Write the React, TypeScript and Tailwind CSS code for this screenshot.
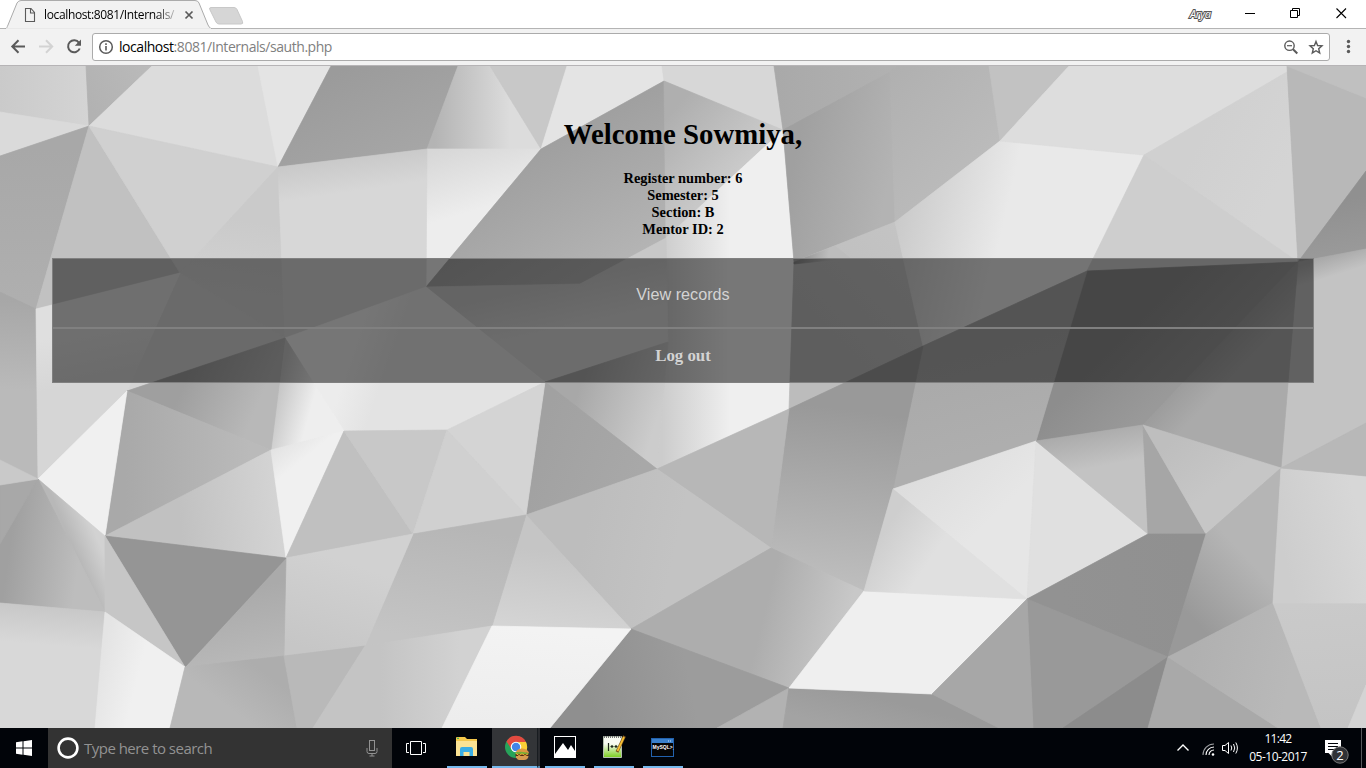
import React from "react";

type Facet = [points: string, from: string, to?: string, axis?: [number, number, number, number]];

const facets: Facet[] = [
  ["0,66 86,66 89,126 0,112", "#cacaca", "#d4d4d4", [0, 90, 89, 90]],
  ["0,112 89,126 0,156", "#dadada"],
  ["86,66 152,66 89,126", "#b2b2b2", "#bababa", [86, 100, 150, 66]],
  ["89,126 152,66 258,66 278,167", "#dcdcdc"],
  ["258,66 331,66 278,167", "#e4e4e4"],
  ["331,66 458,66 427,149 278,167", "#9b9b9b", "#a6a6a6", [350, 66, 400, 160]],
  ["458,66 490,66 541,149 427,149", "#b4b4b4", "#dcdcdc", [435, 110, 510, 110]],
  ["490,66 567,66 541,149", "#c8c8c8"],
  ["567,66 662,66 664,81 541,149", "#e4e4e4"],
  ["662,66 774,66 783,130 664,81", "#d7d7d7"],
  ["427,149 541,149 426,287", "#d7d7d7", "#ededed", [440, 149, 460, 215]],
  ["541,149 664,81 666,238 580,284 426,287", "#9d9d9d", "#b4b4b4", [540, 130, 620, 265]],
  ["664,81 783,130 666,238", "#afafaf", "#cacaca", [664, 120, 730, 180]],
  ["783,130 666,238 668,342 657,469 789,409 794,262", "#cccccc", "#efefef", [662, 240, 730, 240]],
  ["426,287 580,284 666,238 668,342 545,382", "#c8c8c8", "#d8d8d8", [540, 285, 550, 330]],
  ["545,382 668,342 657,469", "#a8a8a8", "#cccccc", [580, 385, 660, 410]],
  ["545,382 657,469 526,515", "#a1a1a1", "#a8a8a8", [540, 430, 640, 470]],
  ["774,66 897,66 890,72 783,130", "#a9a9a9", "#b1b1b1", [774, 80, 890, 80]],
  ["783,130 890,72 895,222 794,262", "#a0a0a0", "#b3b3b3", [790, 180, 885, 200]],
  ["890,72 897,66 989,66 1000,141 895,222", "#b0b0b0", "#bbbbbb", [895, 66, 990, 150]],
  ["989,66 1069,66 1000,141", "#c2c2c2"],
  ["794,262 895,222 923,346 789,409", "#bcbcbc", "#c4c4c4", [794, 320, 900, 220]],
  ["794,262 835,246 850,258 794,264", "#888888", "#bdbdbd", [794, 258, 828, 262]],
  ["895,222 1000,141 1144,155 1088,271 923,346", "#c8c8c8", "#e9e9e9", [890, 215, 1000, 240]],
  ["1000,141 1069,66 1288,66 1287,72 1144,155", "#dddddd"],
  ["1287,72 1298,262 1144,155", "#d0d0d0", "#d4d4d4", [1200, 140, 1280, 180]],
  ["1144,155 1298,262 1087,271", "#cecece"],
  ["1287,66 1366,98 1366,171 1298,262", "#b8b8b8"],
  ["1287,66 1366,66 1366,98", "#c0c0c0"],
  ["1298,262 1366,171 1366,249", "#909090", "#9a9a9a", [1340, 200, 1350, 255]],
  ["1298,262 1366,249 1366,423 1281,468", "#aaaaaa", "#c3c3c3", [1330, 256, 1336, 275]],
  ["1087,271 1298,262 1143,425 1036,441", "#8d8d8d", "#999999", [1140, 320, 1190, 370]],
  ["1298,262 1143,425 1281,468", "#999999", "#aaaaaa", [1215, 335, 1245, 363]],
  ["923,346 1087,271 1036,441 893,489", "#a8a8a8", "#aeaeae", [950, 340, 980, 450]],
  ["789,409 923,346 893,489 864,591 771,548", "#999999", "#bebebe", [850, 410, 828, 585]],
  ["789,409 771,548 657,469", "#b7b7b7"],
  ["657,469 771,548 631,629 526,515", "#bdbdbd", "#c3c3c3", [590, 510, 680, 530]],
  ["526,515 631,629 492,626", "#c5c5c5", "#d4d4d4", [540, 550, 530, 626]],
  ["771,548 864,591 789,688 631,629", "#adadad", "#c8c8c8", [765, 610, 845, 630]],
  ["631,629 789,688 717,728 550,728", "#8f8f8f", "#9c9c9c", [590, 700, 690, 680]],
  ["789,688 717,728 783,728", "#b2b2b2"],
  ["789,688 932,694 999,728 783,728", "#9a9a9a", "#a3a3a3", [850, 690, 840, 728]],
  ["864,591 1027,599 932,694 789,688", "#efefef"],
  ["893,489 1036,441 1027,599", "#dddddd", "#e6e6e6", [920, 470, 980, 530]],
  ["893,489 1027,599 864,591", "#cecece", "#e0e0e0", [885, 530, 930, 560]],
  ["1036,441 1148,534 1027,599", "#e0e0e0"],
  ["1036,441 1143,425 1148,534", "#ababab", "#c3c3c3", [1085, 432, 1092, 468]],
  ["1143,425 1148,534 1206,534", "#a6a6a6"],
  ["1143,425 1206,534 1281,468", "#bebebe", "#c6c6c6", [1160, 450, 1200, 500]],
  ["1148,534 1206,534 1168,657 1027,599", "#929292", "#909090", [1060, 590, 1190, 570]],
  ["1206,534 1281,468 1273,603 1168,657", "#999999", "#b5b5b5", [1180, 605, 1240, 550]],
  ["1027,599 1168,657 1063,728 1033,728", "#999999"],
  ["1027,599 1033,728 999,728 932,694", "#a7a7a7"],
  ["1168,657 1063,728 1148,728", "#8c8c8c"],
  ["1168,657 1148,728 1278,728", "#a9a9a9"],
  ["1168,657 1273,603 1321,728 1278,728", "#b0b0b0", "#b9b9b9", [1190, 660, 1290, 680]],
  ["1273,603 1366,603 1366,685 1348,728 1321,728", "#cacaca", "#c4c4c4", [1310, 603, 1320, 728]],
  ["1366,685 1348,728 1366,728", "#d4d4d4"],
  ["1281,468 1366,476 1366,603 1273,603", "#cdcdcd", "#d7d7d7", [1280, 540, 1360, 520]],
  ["1281,468 1366,423 1366,476", "#b8b8b8"],
  ["0,156 89,126 36,309 0,292", "#a8a8a8", "#afafaf", [30, 150, 30, 300]],
  ["0,292 36,309 38,479 0,460", "#a7a7a7", "#bababa", [15, 300, 10, 390]],
  ["89,126 180,273 36,309", "#c1c1c1"],
  ["89,126 278,167 180,273", "#d0d0d0"],
  ["278,167 285,338 180,273", "#cacaca", "#d2d2d2", [240, 220, 230, 290]],
  ["278,167 427,149 426,287 285,338", "#c9c9c9", "#d7d7d7", [345, 158, 350, 192]],
  ["180,273 285,338 127,391", "#d4d4d4"],
  ["36,309 180,273 127,391 38,479", "#dfdfdf", "#d6d6d6", [90, 330, 100, 380]],
  ["285,338 426,287 545,382 447,430 344,431", "#ececec", "#e3e3e3", [340, 390, 375, 402]],
  ["285,338 344,431 271,450", "#c5c5c5", "#eeeeee", [276, 395, 312, 405]],
  ["127,391 285,338 271,450", "#9f9f9f", "#b8b8b8", [190, 370, 260, 400]],
  ["105,536 127,391 271,450", "#a9a9a9", "#bababa", [125, 450, 250, 450]],
  ["38,479 127,391 105,536", "#f0f0f0"],
  ["105,536 271,450 286,558", "#c1c1c1", "#d4d4d4", [180, 520, 280, 510]],
  ["271,450 344,431 286,558", "#dfdfdf", "#f0f0f0", [278, 435, 300, 462]],
  ["344,431 413,534 286,558", "#c0c0c0"],
  ["344,431 447,430 413,534", "#c8c8c8"],
  ["447,430 545,382 526,515", "#d4d4d4"],
  ["447,430 526,515 413,534", "#d0d0d0"],
  ["413,534 526,515 492,626 365,646", "#b6b6b6", "#c4c4c4", [450, 525, 430, 640]],
  ["286,558 413,534 365,646 284,656", "#d1d1d1", "#c6c6c6", [340, 560, 310, 650]],
  ["286,558 284,656 185,667", "#aaaaaa", "#b8b8b8", [240, 590, 255, 660]],
  ["105,536 286,558 185,667", "#959595"],
  ["38,479 105,536 105,612", "#b8b8b8", "#d2d2d2", [75, 550, 98, 540]],
  ["0,603 0,540 38,479 105,612", "#a0a0a0", "#bdbdbd", [5, 580, 75, 590]],
  ["0,485 38,479 0,544", "#a8a8a8"],
  ["0,460 38,479 0,485", "#c9c9c9"],
  ["105,536 185,667 105,612", "#c6c6c6"],
  ["0,603 105,612 95,728 0,728", "#c8c8c8", "#d8d8d8", [50, 607, 47, 645]],
  ["105,612 185,667 170,728 95,728", "#e4e4e4", "#f0f0f0", [100, 660, 140, 670]],
  ["185,667 284,656 297,728 170,728", "#adadad", "#b8b8b8", [255, 665, 225, 705]],
  ["284,656 365,646 313,728 297,728", "#b9b9b9"],
  ["365,646 492,626 442,728 313,728", "#c4c4c4", "#d2d2d2", [380, 690, 460, 690]],
  ["492,626 631,629 550,728 442,728", "#f3f3f3", "#ededed", [540, 630, 530, 728]],
];

const Backdrop = () => (
  <svg className="absolute inset-0 h-full w-full" viewBox="0 66 1366 662" preserveAspectRatio="none" aria-hidden="true">
    <defs>
      <filter id="soften" x="0" y="0" width="1" height="1">
        <feGaussianBlur stdDeviation="0.7" />
      </filter>
      {facets.map(([, from, to, axis], i) =>
        to && axis ? (
          <linearGradient key={i} id={`f${i}`} gradientUnits="userSpaceOnUse" x1={axis[0]} y1={axis[1]} x2={axis[2]} y2={axis[3]}>
            <stop offset="0" stopColor={from} />
            <stop offset="1" stopColor={to} />
          </linearGradient>
        ) : null
      )}
    </defs>
    <g id="mesh">
      {facets.map(([points, from, to], i) => {
        const paint = to ? `url(#f${i})` : from;
        return <polygon key={i} points={points} fill={paint} stroke={paint} strokeWidth="0.7" />;
      })}
    </g>
    <use href="#mesh" filter="url(#soften)" />
  </svg>
);

const TitleBar = () => (
  <div className="relative h-[28px] shrink-0 bg-white">
    <svg className="absolute inset-0" width="1366" height="29" aria-hidden="true">
      <path d="M0 28.5H1366" stroke="#b4b4b4" />
      <path d="M5 29 C7 28.500 7 27 8 25 L17 3 Q18.500 .5 21 .5 H195 Q198 .5 199 3 L208 25 Q209.500 28.500 212 29Z" fill="#f2f2f2" stroke="#ababab" />
      <path d="M6 29H211" stroke="#f2f2f2" strokeWidth="1.500" />
      <path d="M211 7.500H234Q236 7.500 237 9.500L242.500 21.500Q243.500 24 241 24H219Q217 24 216 22L209.800 9.500Q209 7.500 211 7.500Z" fill="#d6d6d6" stroke="#c8c8c8" />
      <path d="M25.500 8.500H31L34.500 12.500V21.500H25.500ZM30.500 8.500V13H34.500" fill="none" stroke="#5a5a5a" strokeWidth="1.100" />
      <path d="M185.500 11.500L192.500 18.500M192.500 11.500L185.500 18.500" stroke="#5a5a5a" strokeWidth="1.700" />
      <path d="M1245 13.500H1255" stroke="#000" />
      <path d="M1290.500 10.500H1297.500V17.500H1290.500ZM1292.500 10.500V8.500H1299.500V15.500H1297.500" fill="none" stroke="#000" />
      <path d="M1336.500 8.500L1346 18M1346 8.500L1336.500 18" stroke="#000" strokeWidth="1.100" />
    </svg>
    <div className="relative flex h-full items-center">
      <span className="ml-[44px] w-[136px] whitespace-nowrap bg-gradient-to-r from-black from-[82%] to-transparent bg-clip-text pt-[2px] font-['Open_Sans',sans-serif] text-[12px] leading-[18px] tracking-[-0.360px] text-transparent">
        localhost:8081/Internals/
      </span>
      <span className="ml-[1010px] font-['Open_Sans',sans-serif] text-[11px] font-normal italic leading-4 tracking-[-0.300px] text-white [-webkit-text-stroke:2px_#555] [paint-order:stroke_fill]">
        Arya
      </span>
    </div>
  </div>
);

const Toolbar = () => (
  <div className="flex h-[38px] shrink-0 items-center border-b border-[#b6b4b6] bg-[#f2f2f2]">
    <svg width="92" height="37" className="shrink-0" fill="none" stroke="#5a5a5a" strokeWidth="2" aria-hidden="true">
      <path d="M25 18.500H12.500M18.500 12.300L12.300 18.500L18.500 24.700" />
      <path d="M39 18.500H51.500M46 12.300L52.200 18.500L46 24.700" stroke="#d3d3d3" />
      <path d="M79 14.800A6 6 0 1 0 79.700 20.500" />
      <path d="M81 11.500V17.700H74.800Z" fill="#5a5a5a" stroke="none" />
    </svg>
    <div className="flex h-[28px] w-[1238px] items-center rounded-[3px] border border-[#ababab] bg-white">
      <svg width="26" height="26" className="shrink-0" fill="none" stroke="#5a5a5a" aria-hidden="true">
        <circle cx="13" cy="13" r="6.300" strokeWidth="1.500" />
        <path d="M13 12V16.500M13 9.300V11" strokeWidth="1.600" />
      </svg>
      <span className="whitespace-nowrap font-['Open_Sans',sans-serif] text-[14px] leading-5 tracking-[-0.450px] text-[#808080]">
        <span className="text-black">localhost</span>:8081/Internals/sauth.php
      </span>
      <svg width="50" height="26" className="ml-auto mr-[4px] shrink-0" fill="none" stroke="#5a5a5a" aria-hidden="true">
        <circle cx="14.500" cy="11.700" r="4.700" strokeWidth="1.400" />
        <path d="M12 11.700H17" strokeWidth="1.200" />
        <path d="M18 15.200L22.300 19.500" strokeWidth="2" />
        <path d="M42 7.500L43.600 11.500L48 11.900L44.700 14.700L45.700 19L42 16.700L38.300 19L39.300 14.700L36 11.900L40.400 11.500Z" transform="translate(-1 0)" strokeWidth="1.400" />
      </svg>
    </div>
    <svg width="36" height="37" fill="#5a5a5a" aria-hidden="true">
      <circle cx="18.500" cy="13.500" r="1.700" />
      <circle cx="18.500" cy="18.500" r="1.700" />
      <circle cx="18.500" cy="23.500" r="1.700" />
    </svg>
  </div>
);

const TaskButton = ({ children }: { children: React.ReactNode }) => (
  <div className="flex h-full w-[49px] items-center justify-center">
    <div className="flex h-full w-[40px] items-center justify-center border-b-2 border-[#76b9ed]">{children}</div>
  </div>
);

const Taskbar = () => (
  <footer className="flex h-[40px] shrink-0 bg-[#010409] font-['Open_Sans',sans-serif]">
    <div className="flex w-[48px] items-center justify-center">
      <svg width="16" height="16" fill="#fff" aria-hidden="true">
        <path d="M0 2.200L6.500 1.300V7.500H0ZM7.500 1.200L16 0V7.500H7.500ZM0 8.500H6.500V14.700L0 13.800ZM7.500 8.500H16V16L7.500 14.800Z" />
      </svg>
    </div>
    <div className="flex w-[344px] items-center bg-[#333333]">
      <svg width="36" height="40" aria-hidden="true">
        <circle cx="20" cy="20" r="9.400" fill="none" stroke="#fff" strokeWidth="2.600" />
      </svg>
      <span className="whitespace-nowrap text-[15px] leading-5 tracking-[-0.520px] text-[#929292]">Type here to search</span>
      <svg width="14" height="18" className="ml-auto mr-[13px]" fill="none" stroke="#929292" aria-hidden="true">
        <rect x="4.500" y="1.500" width="5" height="10" />
        <path d="M2 9V12.500Q2 14.500 4 14.500H10Q12 14.500 12 12.500V9M7 14.500V17M4.500 17H9.500" />
      </svg>
    </div>
    <div className="flex w-[50px] items-center pl-[14px]">
      <svg width="20" height="16" fill="none" stroke="#fff" aria-hidden="true">
        <path d="M4.500 1.500H15.500V14.500H4.500ZM3 3.500H.5V12.500H3M17 3.500H19.500V12.500H17" />
      </svg>
    </div>
    <TaskButton>
      <svg width="22" height="20" aria-hidden="true">
        <path d="M0 1Q0 0 1 0H9L11 2H21V19H0Z" fill="#f5c84c" />
        <path d="M0 4H21V18Q21 19 20 19H1Q0 19 0 18Z" fill="#fbe394" />
        <path d="M1 .8H3V2H1Z" fill="#43b85d" />
        <path d="M4 19V12Q4 10 6 10H15Q17 10 17 12V19H13.500V15H7.500V19Z" fill="#3aaee4" />
      </svg>
    </TaskButton>
    <div className="flex h-full w-[49px]">
      <div className="ml-[1px] flex h-full w-[45px] items-center justify-center border-b-2 border-[#76b9ed] bg-[#333538]">
        <svg width="26" height="26" viewBox="0 0 26 26" className="ml-[4px] mt-[2px]" aria-hidden="true">
          <circle cx="12" cy="12" r="11" fill="#27a35a" />
          <path d="M2.500 6.500A11 11 0 0 1 22 7H12A5 5 0 0 0 7.500 14Z" fill="#e34a40" />
          <path d="M22 7A11 11 0 0 1 12 23L16.500 14A5 5 0 0 0 12 7Z" fill="#fbce35" />
          <circle cx="12" cy="12" r="5.300" fill="#fff" />
          <circle cx="12" cy="12" r="4.200" fill="#4285e8" />
          <path d="M12 17Q13 13.500 18.500 13.500Q24 14 25 18Z" fill="#dc9842" />
          <path d="M11 17.500Q18 15.500 25 18.500L24 20H12Z" fill="#77ac35" />
          <path d="M11.500 19H24.500V21.500H11.500Z" fill="#542817" />
          <path d="M12 21H24.500Q24 25 20 25H15Q12 24 12 21Z" fill="#d69a50" />
          <path d="M12 18.500L15 20.500L18 18.800L21 20.500L24 19" fill="none" stroke="#f0bc38" />
        </svg>
      </div>
      <div className="w-[3px] border-b-2 border-l border-b-[#5586ac] border-l-[#181c20] bg-[#292b2f]" />
    </div>
    <TaskButton>
      <svg width="22" height="22" aria-hidden="true">
        <path d="M0 0H22V22H0Z" fill="#fff" />
        <path d="M1 1H21V15L17 9L14 14L9 7L1 18Z" fill="#010409" />
      </svg>
    </TaskButton>
    <TaskButton>
      <svg width="24" height="26" viewBox="0 0 24 26" aria-hidden="true">
        <defs>
          <linearGradient id="page" x2="0" y2="1">
            <stop offset=".35" stopColor="#f8fbf2" />
            <stop offset="1" stopColor="#79cd1c" />
          </linearGradient>
        </defs>
        <path d="M1.500 2.500H19.500V23.500H1.500Z" fill="url(#page)" stroke="#b4c0ae" />
        <path d="M2 3H19" stroke="#777" strokeWidth="2" strokeDasharray="1 1" />
        <path d="M6.500 9V17M8.500 12.500H11.500M12.500 12.500H15.500M10 11V14M14 11V14" stroke="#1d2619" strokeWidth="1.200" />
        <path d="M22.500 2L15 18" stroke="#76501c" strokeWidth="3" />
        <path d="M22 3L15.500 17" stroke="#f6bf35" strokeWidth="1.800" />
      </svg>
    </TaskButton>
    <TaskButton>
      <svg width="23" height="19" aria-hidden="true">
        <rect x=".5" y=".5" width="22" height="18" fill="#050505" stroke="#2262ae" />
        <path d="M1 1H22V5H1Z" fill="#3a80cc" />
        <path d="M17 3H21" stroke="#cfe3fa" strokeDasharray="1 1" />
        <text x="1.500" y="11" fill="#fff" fontSize="5" fontWeight="bold" fontFamily="Liberation Sans, sans-serif">MySQL&gt;_</text>
      </svg>
    </TaskButton>
    <div className="ml-auto flex items-center">
      <svg width="65" height="40" fill="none" stroke="#fff" aria-hidden="true">
        <path d="M4.500 22.500L10 17L15.500 22.500" strokeWidth="1.400" />
        <g transform="translate(1 1)" strokeWidth="1.100">
          <path d="M29 26A11 11 0 0 1 40 15" stroke="#9b9da0" />
          <path d="M32 26A8 8 0 0 1 40 18" />
          <path d="M35 26A5 5 0 0 1 40 21" />
          <circle cx="39" cy="25.500" r="1.300" fill="#fff" stroke="none" />
        </g>
        <path d="M49.500 17.500H52L55.500 14.500V25.500L52 22.500H49.500V17.500ZM58 17.500Q59.500 20 58 22.500M60.500 16Q63 20 60.500 24M62.800 14.500Q66 20 62.800 25.500" />
      </svg>
      <div className="flex w-[80px] flex-col items-center text-[12px] leading-[18px] text-white">
        <span className="tracking-[-0.700px]">11:42</span>
        <span className="tracking-[-0.500px]">05-10-2017</span>
      </div>
      <svg width="48" height="40" aria-hidden="true">
        <path d="M7 12H23V25H14.500V29L10.500 25H7Z" fill="#fff" />
        <path d="M10 15.500H20M10 18.500H20M10 21.500H17" stroke="#010409" />
        <circle cx="22" cy="27" r="8.200" fill="#303236" stroke="#777" />
        <text x="22" y="31.500" textAnchor="middle" fill="#fff" fontSize="13" fontFamily="Open Sans, sans-serif">2</text>
        <path d="M43.500 0V40" stroke="#55585b" />
      </svg>
    </div>
  </footer>
);

export default function App() {
  return (
    <div className="flex h-[768px] w-[1366px] flex-col overflow-hidden">
      <TitleBar />
      <Toolbar />
      <main className="relative h-[662px] shrink-0 overflow-hidden">
        <Backdrop />
        <div className="relative flex flex-col px-[52px] pt-[52px] text-center font-['Liberation_Serif',serif] font-bold text-black">
          <h1 className="text-[28.8px] leading-[32px]">Welcome Sowmiya,</h1>
          <div className="mt-[20px] text-[14.4px] leading-[17px]">
            <p>Register number: 6</p>
            <p>Semester: 5</p>
            <p>Section: B</p>
            <p>Mentor ID: 2</p>
          </div>
          <div className="mt-[20px] flex flex-col text-[#d3d3d3]">
            <button className="h-[70px] border border-[#808080] bg-black/50 pt-[2px] font-['Liberation_Sans',sans-serif] text-[16.2px] font-normal leading-[18px]">View records</button>
            <button className="h-[55px] border border-[#808080] bg-black/50 text-[16.85px] font-bold">Log out</button>
          </div>
        </div>
      </main>
      <Taskbar />
    </div>
  );
}
